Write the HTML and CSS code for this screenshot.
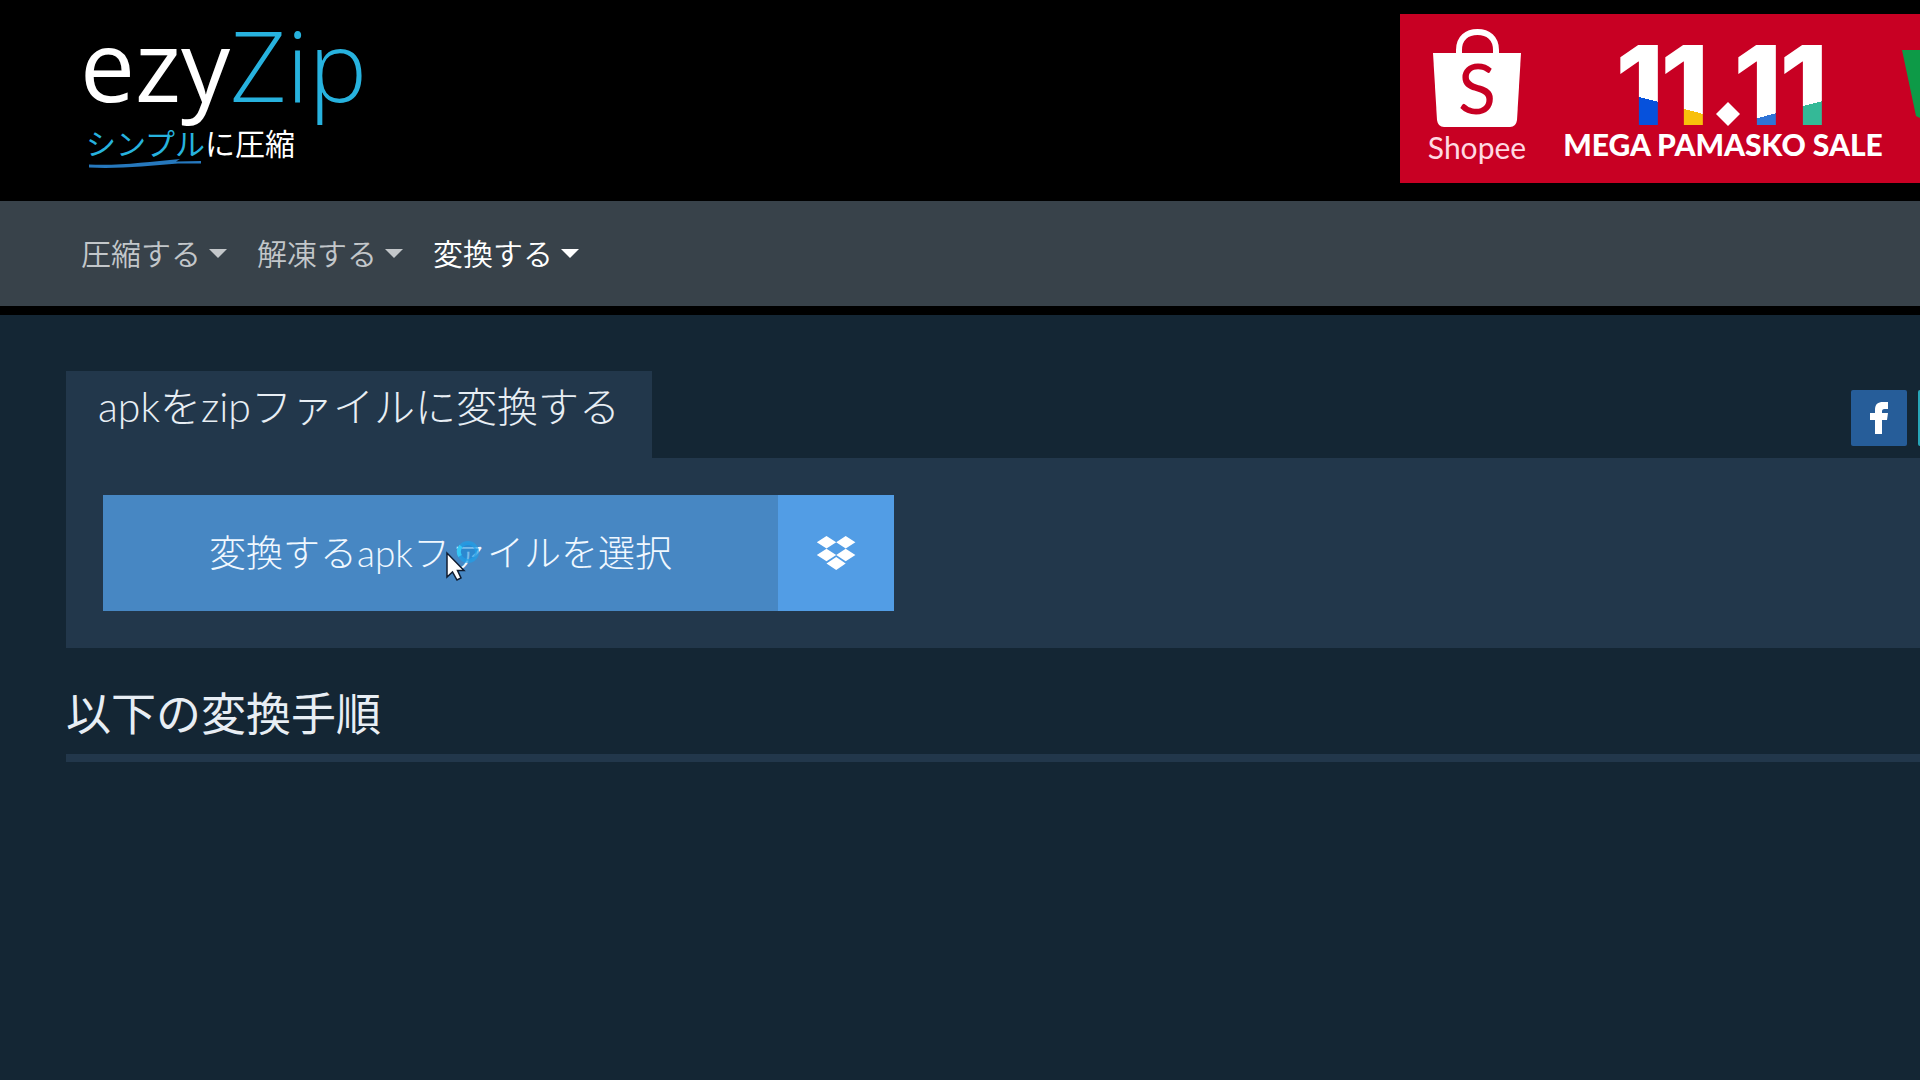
FILE: index.html
```html
<!DOCTYPE html>
<html lang="ja">
<head>
<meta charset="utf-8">
<meta name="viewport" content="width=device-width, initial-scale=1">
<title>apkをzipファイルに変換する - ezyZip</title>
<link rel="stylesheet" href="styles.css">
</head>
<body>
<header class="header">
  <a class="logo" href="#">
    <span class="logo-name">ezy<span class="logo-zip">Zip</span></span>
    <span class="logo-tagline"><span class="logo-accent">シンプル</span>に圧縮</span>
    <svg class="logo-line" width="114" height="12" viewBox="0 0 114 12" aria-hidden="true">
      <path d="M1 6.500C30 8 60 4 92 1L88 3.500L113 3V5.500L90 5.500C60 8 30 11 1 9.500Z" fill="#2678bd"/>
    </svg>
  </a>
  <a class="ad" href="#" aria-label="Shopee 11.11 Mega Pamasko Sale">
    <svg width="520" height="169" viewBox="0 0 520 169">
      <defs>
        <linearGradient id="g1" gradientUnits="userSpaceOnUse" x1="249" y1="31" x2="228" y2="112"><stop offset=".63" stop-color="#fff"/><stop offset=".63" stop-color="#0651dc"/></linearGradient>
        <linearGradient id="g2" gradientUnits="userSpaceOnUse" x1="294" y1="31" x2="273" y2="112"><stop offset=".77" stop-color="#fff"/><stop offset=".77" stop-color="#f8c00b"/></linearGradient>
        <linearGradient id="g3" gradientUnits="userSpaceOnUse" x1="366" y1="31" x2="387" y2="112"><stop offset=".82" stop-color="#fff"/><stop offset=".82" stop-color="#2f74d6"/></linearGradient>
        <linearGradient id="g4" gradientUnits="userSpaceOnUse" x1="412" y1="31" x2="433" y2="112"><stop offset=".68" stop-color="#fff"/><stop offset=".68" stop-color="#34b997"/></linearGradient>
      </defs>
      <path d="M59 41V36C59 24 67 18 77.500 18S96 24 96 36V41" fill="none" stroke="#fff" stroke-width="6"/>
      <path d="M33 39H121L117 106Q116 113 110 113H44Q38 113 37 106Z" fill="#fff"/>
      <text class="ad-s" x="77" y="100">S</text>
      <text class="ad-brand" x="77" y="145">Shopee</text>
      <g class="ad-digits">
        <text x="264" y="111" fill="url(#g1)">1</text>
        <text x="309" y="111" fill="url(#g2)">1</text>
        <text x="382" y="111" fill="url(#g3)">1</text>
        <text x="428" y="111" fill="url(#g4)">1</text>
      </g>
      <path d="M328 88L340 100L328 112L316 100Z" fill="#fff"/>
      <text class="ad-sale" x="323" y="142">MEGA PAMASKO SALE</text>
      <path d="M502 36H520V104L516 102Z" fill="#0d9a47"/>
    </svg>
  </a>
</header>

<nav class="nav">
  <button class="nav-item" type="button">圧縮する</button>
  <button class="nav-item" type="button">解凍する</button>
  <button class="nav-item nav-item-active" type="button">変換する</button>
</nav>

<main class="main">
  <div class="panel-top">
    <h1 class="tab">apkをzipファイルに変換する</h1>
    <div class="share">
      <a class="share-link share-facebook" href="#" aria-label="Facebook">
        <svg width="56" height="56" viewBox="0 0 56 56"><path d="M24 44V30H19V23H24V20C24 14 27 12 32 12H37V19H33.500C31.500 19 31 20 31 21.500V23H37L36 30H31V44Z" fill="#fff"/></svg>
      </a>
      <a class="share-link share-twitter" href="#" aria-label="Twitter"></a>
    </div>
  </div>
  <section class="panel">
    <button class="choose" type="button">変換するapkファイルを選択
      <svg class="pointer" width="36" height="42" viewBox="0 0 36 42" aria-hidden="true">
        <circle cx="22" cy="12" r="9" fill="#1688d8" fill-opacity=".55" stroke="#20a0e8" stroke-opacity=".7" stroke-width="4"/>
        <path d="M15 6A9 9 0 0 0 14 16" fill="none" stroke="#35c7f5" stroke-width="4"/>
        <path d="M1 13V37L6.500 32L11 40L15 38L11.500 30.500H18Z" fill="#fff" stroke="#101c30" stroke-width="1.500"/>
      </svg>
    </button>
    <button class="dropbox" type="button" aria-label="Dropbox">
      <svg width="40" height="35" viewBox="0 0 40 35" fill="#fff"><path d="M10.500 0L20.200 6.300L10.500 12.600L.8 6.300ZM29.700 0L39.400 6.300L29.700 12.600L20.200 6.300ZM10.500 12.700L20.200 19L10.500 25.300L.8 19ZM29.700 12.700L39.400 19L29.700 25.300L20.200 19ZM20.200 21L29.700 27.400L20.200 34L10.500 27.400Z"/></svg>
    </button>
  </section>
  <h2 class="steps">以下の変換手順</h2>
</main>
</body>
</html>
```
FILE: styles.css
```css
* {
  box-sizing: border-box;
}

body {
  margin: 0;
  min-height: 100vh;
  overflow-x: hidden;
  background: #142634;
  color: #e8eef4;
  font-family: Lato, "Noto Sans CJK JP", sans-serif;
}

button {
  border: 0;
  font-family: inherit;
  cursor: pointer;
}

h1,
h2 {
  margin: 0;
}

.header {
  display: flex;
  justify-content: space-between;
  align-items: flex-start;
  padding: 14px 0 18px 80px;
  background: #000;
}

.logo {
  display: flex;
  flex-direction: column;
  color: #fff;
  text-decoration: none;
}

.logo-name {
  font-family: "Open Sans", "Noto Sans", sans-serif;
  font-size: 98px;
  line-height: 100px;
}

.logo-zip {
  color: #27b2de;
  font-weight: 300;
}

.logo-tagline {
  margin-top: 12px;
  padding-left: 6px;
  font-family: "Noto Sans CJK JP", sans-serif;
  font-size: 30px;
  line-height: 32px;
}

.logo-accent {
  color: #27b2de;
}

.logo-line {
  margin-left: 8px;
}

.ad {
  display: block;
  background: #c80023;
}

.ad svg {
  display: block;
}

.ad text {
  font-family: Lato, sans-serif;
  text-anchor: middle;
}

.ad .ad-s {
  fill: #c80023;
  font-size: 70px;
}

.ad .ad-brand {
  fill: #ffd9e2;
  font-size: 30px;
}

.ad .ad-sale {
  fill: #fff;
  font-size: 30px;
  font-weight: 900;
}

.ad .ad-digits text {
  font-family: Inter, sans-serif;
  font-size: 110px;
  font-weight: 800;
  text-anchor: end;
}

.nav {
  display: flex;
  padding: 0 66px;
  border-bottom: 9px solid #000;
  background: #38424a;
}

.nav-item {
  display: flex;
  align-items: center;
  gap: 8px;
  padding: 0 15px;
  background: none;
  color: #c3c7ca;
  font-size: 30px;
  font-weight: 350;
  line-height: 105px;
}

.nav-item::after {
  content: "";
  border: 9px solid transparent;
  border-top-color: currentColor;
  border-bottom: 0;
}

.nav-item-active {
  color: #fff;
}

.main {
  padding: 56px 0 56px 66px;
}

.panel-top {
  display: flex;
  justify-content: space-between;
  align-items: flex-end;
}

.tab {
  padding: 12px 32px 27px;
  background: #22374b;
  font-size: 41px;
  font-weight: 300;
  line-height: 48px;
}

.share {
  display: flex;
  gap: 11px;
  margin-right: -54px;
  padding-bottom: 12px;
}

.share-link {
  width: 56px;
  height: 56px;
  border-radius: 2px;
}

.share-facebook {
  background: #265d99;
}

.share-twitter {
  background: #27a5b8;
}

.panel {
  display: flex;
  padding: 37px;
  background: #22374b;
}

.choose {
  position: relative;
  padding: 0 106px;
  background: #4787c3;
  color: #f0f8ff;
  font-size: 37px;
  font-weight: 300;
  line-height: 116px;
}

.pointer {
  position: absolute;
  top: 45px;
  left: 343px;
}

.dropbox {
  display: grid;
  place-items: center;
  width: 116px;
  background: #529de5;
}

.steps {
  padding: 34px 0 8px;
  border-bottom: 8px solid #22374b;
  font-size: 45px;
  font-weight: 400;
  line-height: 64px;
}
```
